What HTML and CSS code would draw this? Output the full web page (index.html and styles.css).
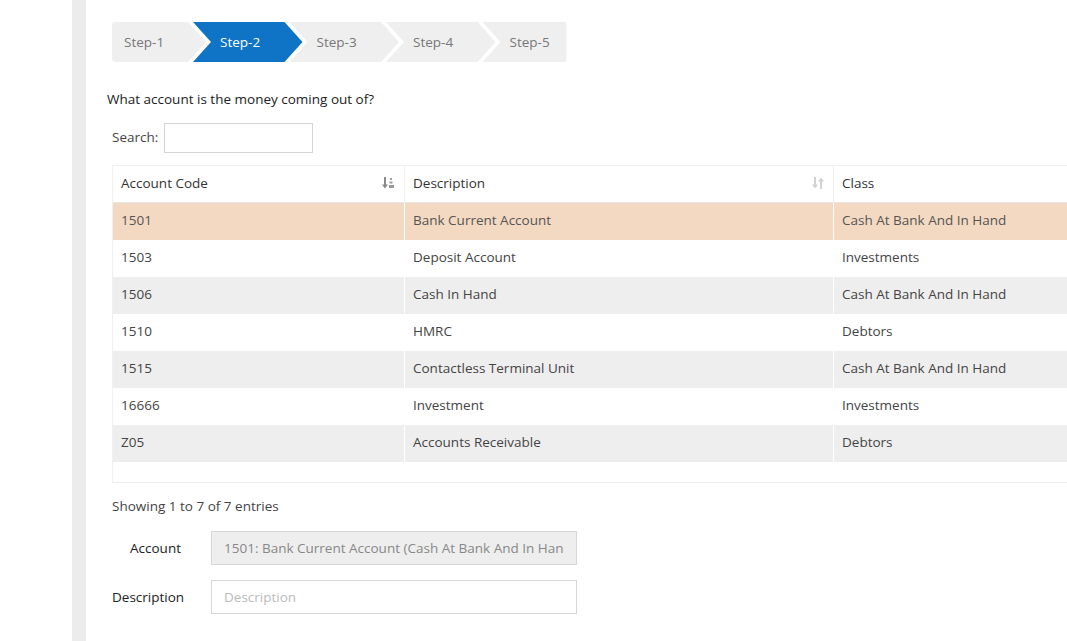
FILE: index.html
```html
<!DOCTYPE html>
<html lang="en">
<head>
  <meta charset="UTF-8">
  <title>Payment - Step 2</title>
  <link rel="stylesheet" href="styles.css">
</head>
<body>
  <div class="page">
    <div class="gutter"></div>
    <div class="rail"></div>
    <div class="main">
      <div class="steps">
        <div class="step first">Step-1</div>
        <div class="step active">Step-2</div>
        <div class="step">Step-3</div>
        <div class="step">Step-4</div>
        <div class="step last">Step-5</div>
      </div>

      <p class="question">What account is the money coming out of?</p>

      <div class="search">
        <label for="search">Search:</label>
        <input id="search" type="text">
      </div>

      <div class="table-wrap">
        <table class="accounts">
          <thead>
            <tr>
              <th class="col-code">Account Code
                <svg class="sort-icon" width="13" height="12" viewBox="0 0 13 12">
                  <path d="M3 0v9" stroke="#8a8a8a" stroke-width="2"/>
                  <path d="M0 7.5l3 4 3-4z" fill="#8a8a8a"/>
                  <rect x="8" y="1" width="2" height="2" fill="#9a9a9a"/>
                  <rect x="7.5" y="4.5" width="3" height="2" fill="#9a9a9a"/>
                  <rect x="7" y="8" width="5" height="3" fill="#9a9a9a"/>
                </svg>
              </th>
              <th class="col-desc">Description
                <svg class="sort-icon" width="12" height="12" viewBox="0 0 12 12">
                  <path d="M3 0v9" stroke="#d2d2d2" stroke-width="2"/>
                  <path d="M0 7.5l3 4 3-4z" fill="#d2d2d2"/>
                  <path d="M9 3v9" stroke="#d2d2d2" stroke-width="2"/>
                  <path d="M6 4.5l3-4 3 4z" fill="#d2d2d2"/>
                </svg>
              </th>
              <th>Class</th>
            </tr>
          </thead>
          <tbody>
            <tr class="selected"><td>1501</td><td>Bank Current Account</td><td>Cash At Bank And In Hand</td></tr>
            <tr><td>1503</td><td>Deposit Account</td><td>Investments</td></tr>
            <tr class="alt"><td>1506</td><td>Cash In Hand</td><td>Cash At Bank And In Hand</td></tr>
            <tr><td>1510</td><td>HMRC</td><td>Debtors</td></tr>
            <tr class="alt"><td>1515</td><td>Contactless Terminal Unit</td><td>Cash At Bank And In Hand</td></tr>
            <tr><td>16666</td><td>Investment</td><td>Investments</td></tr>
            <tr class="alt"><td>Z05</td><td>Accounts Receivable</td><td>Debtors</td></tr>
          </tbody>
        </table>
        <div class="table-spacer"></div>
      </div>

      <div class="info">Showing 1 to 7 of 7 entries</div>

      <div class="form-row">
        <label class="form-label account-label">Account</label>
        <input class="form-input" type="text" value="1501: Bank Current Account (Cash At Bank And In Hand)" readonly>
      </div>
      <div class="form-row">
        <label class="form-label">Description</label>
        <input class="form-input editable" type="text" placeholder="Description">
      </div>
    </div>
  </div>
</body>
</html>
```

FILE: styles.css
```css
html, body {
  margin: 0;
  height: 100%;
  overflow: hidden;
}
body {
  font-family: "Open Sans", Arial, sans-serif;
  font-size: 13.5px;
  color: #333;
  background: #fff;
}
.page {
  display: flex;
  height: 100%;
}
.gutter {
  width: 72px;
  flex: none;
}
.rail {
  width: 14px;
  flex: none;
  background-color: #ececec;
}
.main {
  flex: 1;
  min-width: 0;
  padding: 22px 0 0 26px;
  border-top: 6px solid #fcfcfa;
  margin-top: -6px;
}

/* wizard steps */
.steps {
  display: flex;
  height: 40px;
}
.step {
  background-color: #efefef;
  color: #777;
  line-height: 40px;
  width: 109.5px;
  padding-left: 27px;
  box-sizing: border-box;
  margin-left: -13px;
  clip-path: polygon(0 0, calc(100% - 18px) 0, 100% 50%, calc(100% - 18px) 100%, 0 100%, 18px 50%);
}
.step.first {
  width: 94px;
  padding-left: 12px;
  margin-left: 0;
  border-radius: 3px 0 0 3px;
  clip-path: polygon(0 0, calc(100% - 18px) 0, 100% 50%, calc(100% - 18px) 100%, 0 100%);
}
.step.active {
  background-color: #0f74c6;
  color: #fff;
}
.step.last {
  width: 84px;
  clip-path: polygon(0 0, 100% 0, 100% 100%, 0 100%, 18px 50%);
  border-radius: 0 3px 3px 0;
}

.question {
  margin: 27px 0 0 -5px;
  line-height: 20px;
  color: #222;
}

.search {
  display: flex;
  align-items: center;
  margin-top: 14px;
}
.search label {
  margin-right: 6px;
  color: #444;
  position: relative;
  top: -1px;
}
.search input {
  width: 149px;
  height: 30px;
  box-sizing: border-box;
  border: 1px solid #d4d4d4;
  outline: none;
}

/* table */
.table-wrap {
  margin-top: 12px;
  width: 1000px;
  border-left: 1px solid #f0f0f0;
  border-top: 1px solid #efefef;
  border-bottom: 1px solid #ececec;
}
.accounts {
  width: 100%;
  border-collapse: collapse;
  table-layout: fixed;
}
.accounts th {
  text-align: left;
  font-weight: normal;
  color: #333;
  height: 34px;
  padding: 0 8px 2px;
  border-right: 1px solid #f0f0f0;
  border-bottom: 1px solid #e6e6e6;
  position: relative;
}
.accounts th.col-code {
  width: 275px;
}
.accounts th.col-desc {
  width: 412px;
}
.sort-icon {
  position: absolute;
  right: 9px;
  top: 11px;
}
.accounts td {
  height: 37px;
  padding: 0 8px 2px;
  box-sizing: border-box;
  color: #444;
  border-right: 1px solid #fff;
}
.accounts tr.selected td {
  background-color: #f4d9c2;
  color: #555;
}
.accounts tr.alt td {
  background-color: #efeeee;
}
.table-spacer {
  height: 20px;
}

.info {
  margin-top: 13px;
  line-height: 20px;
  color: #444;
}

/* form */
.form-row {
  display: flex;
  align-items: center;
  margin-top: 15px;
}
.form-label {
  width: 72px;
  text-align: right;
  margin-right: 27px;
  color: #222;
}
.account-label {
  padding-right: 3px;
  box-sizing: border-box;
}
.form-input {
  width: 366px;
  height: 34px;
  box-sizing: border-box;
  border: 1px solid #d6d6d6;
  padding: 0 12px;
  font-family: "Open Sans", Arial, sans-serif;
  font-size: 13.5px;
  color: #888;
  background-color: #eeeeee;
  outline: none;
}
.form-input.editable {
  background-color: #fff;
}
.form-input::placeholder {
  color: #bbb;
}
```
